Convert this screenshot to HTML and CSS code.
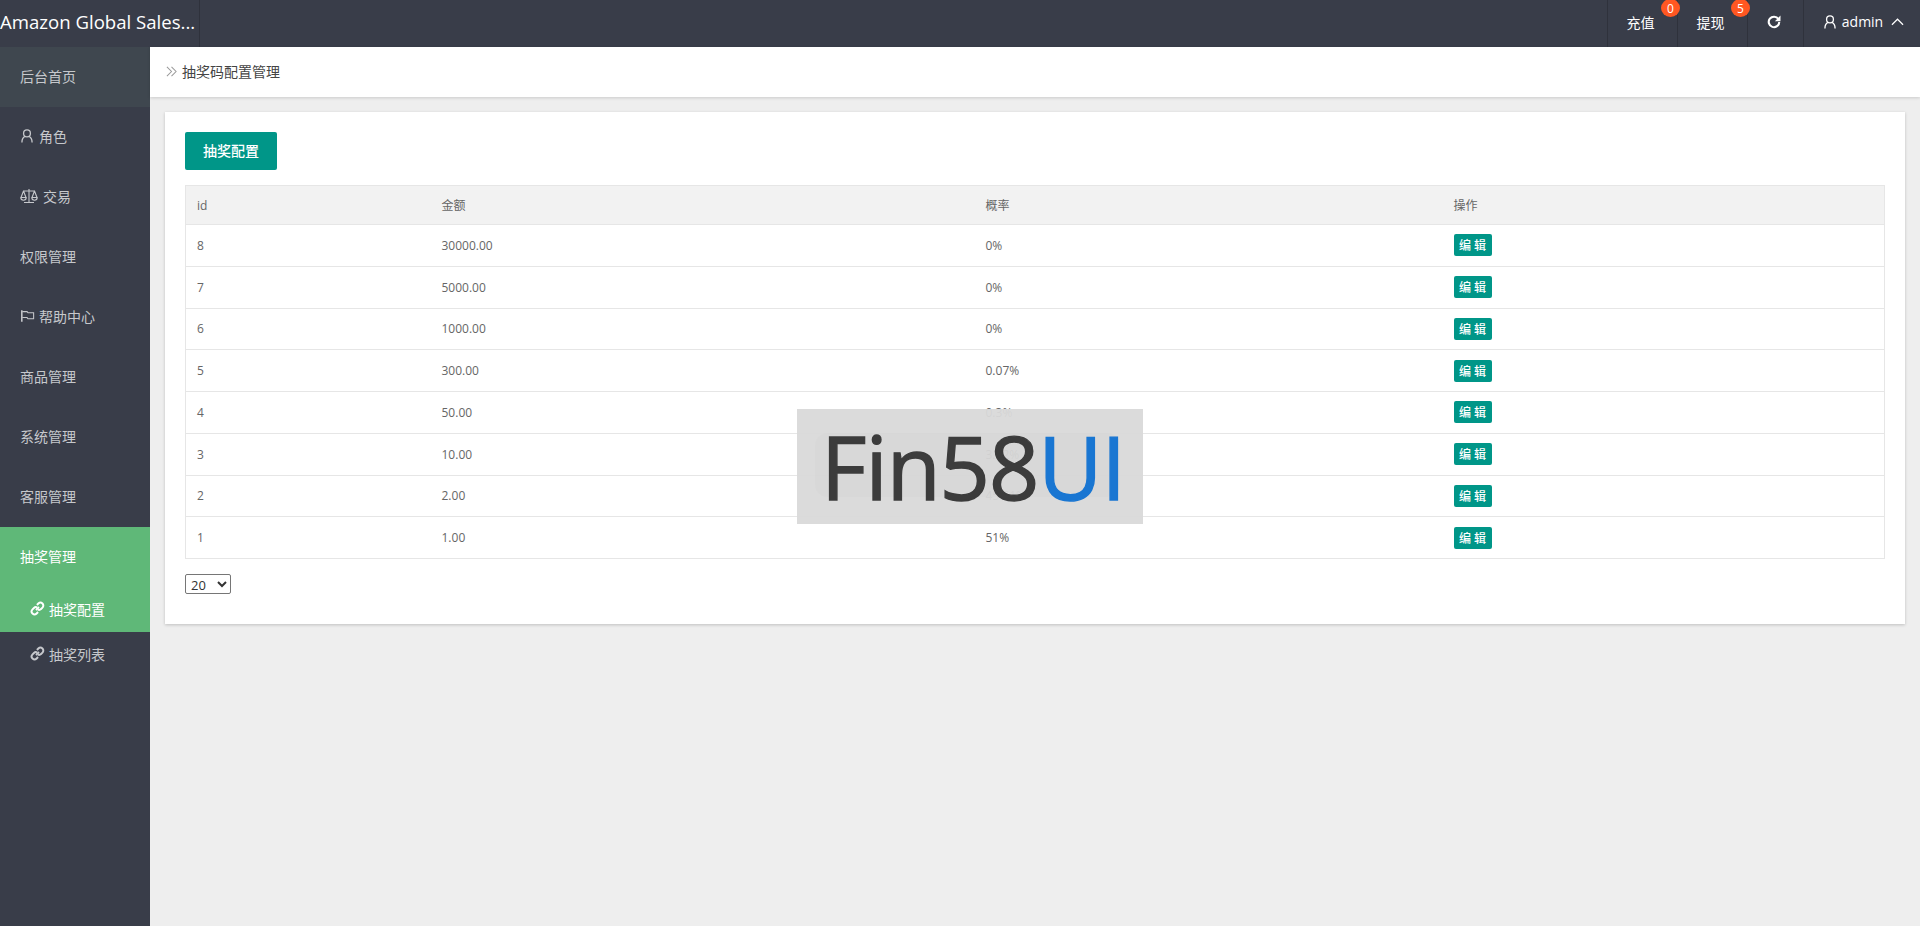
FILE: index.html
```html
<!DOCTYPE html>
<html lang="zh-CN">
<head>
    <meta charset="UTF-8">
    <title>抽奖码配置管理</title>
    <link rel="stylesheet" href="styles.css">
</head>
<body>
    <header class="topbar">
        <div class="logo">Amazon Global Sales...</div>
        <ul class="top-nav">
            <li class="top-item top-recharge">充值<span class="badge">0</span></li>
            <li class="top-item top-withdraw">提现<span class="badge">5</span></li>
            <li class="top-item top-refresh">
                <svg class="icon-refresh" viewBox="0 0 16 16"><path d="M13 4.6A6 6 0 1 0 14 8" fill="none" stroke="currentColor" stroke-width="2.4"/><path d="M9 7h6.4V.6z" fill="currentColor"/></svg>
            </li>
            <li class="top-item top-user">
                <svg class="icon-16" viewBox="0 0 16 16"><use href="#i-user"/></svg>
                admin
                <svg class="icon-caret" viewBox="0 0 14 8"><path d="M1 7l6-6 6 6" fill="none" stroke="currentColor" stroke-width="1.3"/></svg>
            </li>
        </ul>
    </header>

    <svg class="defs">
        <symbol id="i-user" viewBox="0 0 16 16"><circle cx="8" cy="5" r="3.9" fill="none" stroke="currentColor" stroke-width="1.5"/><path d="M2.2 15.5c0-3.6 1.6-6.2 3.6-7M13.8 15.5c0-3.6-1.6-6.2-3.6-7" fill="none" stroke="currentColor" stroke-width="1.5"/></symbol>
        <symbol id="i-link" viewBox="0 0 16 16"><path d="M6.4 9.6l3.2-3.2" stroke="currentColor" stroke-width="2" fill="none"/><path d="M7.4 4.2l1.5-1.5a3.1 3.1 0 0 1 4.4 4.4l-1.5 1.5a3.1 3.1 0 0 1-3.4.6M8.6 11.8l-1.5 1.5a3.1 3.1 0 0 1-4.4-4.4l1.5-1.5a3.1 3.1 0 0 1 3.4-.6" stroke="currentColor" stroke-width="2.1" fill="none"/></symbol>
    </svg>

    <div class="layout">
        <aside class="sidebar">
            <a class="menu-item menu-home">后台首页</a>
            <a class="menu-item"><svg class="icon-16" viewBox="0 0 16 16"><use href="#i-user"/></svg>角色</a>
            <a class="menu-item"><svg class="icon-scale" viewBox="0 0 18 16"><path d="M9 1v13M4 14.5h10M3 3h12M3.5 3L1 9.5M3.5 3L6 9.5M14.5 3L12 9.5M14.5 3L17 9.5M.8 9.5h5.4a2.7 2.7 0 0 1-5.4 0zM11.8 9.5h5.4a2.7 2.7 0 0 1-5.4 0z" fill="none" stroke="currentColor" stroke-width="1.1"/></svg>交易</a>
            <a class="menu-item">权限管理</a>
            <a class="menu-item"><svg class="icon-flag" viewBox="0 0 16 16"><path d="M1.5 1.5v13" stroke="currentColor" stroke-width="1.8"/><path d="M2 3h5.5l1 1.2h6.5v7H8.5l-1-1.4H2" fill="none" stroke="currentColor" stroke-width="1.2"/></svg>帮助中心</a>
            <a class="menu-item">商品管理</a>
            <a class="menu-item">系统管理</a>
            <a class="menu-item">客服管理</a>
            <div class="menu-group">
                <a class="menu-item menu-open">抽奖管理</a>
                <a class="sub-item"><svg class="icon-link" viewBox="0 0 16 16"><use href="#i-link"/></svg>抽奖配置</a>
            </div>
            <a class="sub-item"><svg class="icon-link" viewBox="0 0 16 16"><use href="#i-link"/></svg>抽奖列表</a>
        </aside>

        <main class="main">
            <div class="crumb">
                <svg class="icon-crumb" viewBox="0 0 12 12"><path d="M1 1l5 5-5 5M6 1l5 5-5 5" fill="none" stroke="currentColor" stroke-width="1.1"/></svg>
                抽奖码配置管理
            </div>
            <section class="card">
                <button class="btn">抽奖配置</button>
                <table class="data-table">
                    <colgroup>
                        <col class="col-id"><col class="col-amount"><col class="col-rate"><col>
                    </colgroup>
                    <thead>
                        <tr><th>id</th><th>金额</th><th>概率</th><th>操作</th></tr>
                    </thead>
                    <tbody>
                        <tr><td>8</td><td>30000.00</td><td>0%</td><td><button class="btn-xs">编 辑</button></td></tr>
                        <tr><td>7</td><td>5000.00</td><td>0%</td><td><button class="btn-xs">编 辑</button></td></tr>
                        <tr><td>6</td><td>1000.00</td><td>0%</td><td><button class="btn-xs">编 辑</button></td></tr>
                        <tr><td>5</td><td>300.00</td><td>0.07%</td><td><button class="btn-xs">编 辑</button></td></tr>
                        <tr><td>4</td><td>50.00</td><td>0.3%</td><td><button class="btn-xs">编 辑</button></td></tr>
                        <tr><td>3</td><td>10.00</td><td>3.02%</td><td><button class="btn-xs">编 辑</button></td></tr>
                        <tr><td>2</td><td>2.00</td><td>45.61%</td><td><button class="btn-xs">编 辑</button></td></tr>
                        <tr><td>1</td><td>1.00</td><td>51%</td><td><button class="btn-xs">编 辑</button></td></tr>
                    </tbody>
                </table>
                <select class="page-size">
                    <option>20</option>
                </select>
            </section>
        </main>
    </div>

    <!-- watermark image on top of the table -->
    <div class="watermark">
        <div class="watermark-ghost"></div>
        <span class="wm-dark">Fin58</span><span class="wm-blue">UI</span>
    </div>
</body>
</html>
```

FILE: styles.css
```css
* { box-sizing: border-box; }
html, body { height: 100%; }
body {
    margin: 0;
    height: 926px;
    overflow: hidden;
    background: #eee;
    color: #666;
    font-family: "Open Sans", "Noto Sans CJK SC", sans-serif;
    font-size: 14px;
}
.defs { display: none; }

/* top bar */
.topbar {
    height: 47px;
    background: #393d49;
    display: flex;
    justify-content: space-between;
    color: #fff;
}
.logo {
    width: 200px;
    height: 47px;
    line-height: 44px;
    font-size: 18.6px;
    white-space: nowrap;
    border-right: 1px solid #2f323c;
}
.top-nav {
    list-style: none;
    margin: 0;
    padding: 0;
    display: flex;
}
.top-item {
    position: relative;
    height: 47px;
    display: flex;
    align-items: center;
    justify-content: center;
    padding-bottom: 4px;
    font-size: 14px;
    border-left: 1px solid #2f323c;
}
.top-recharge, .top-withdraw { width: 70px; padding-right: 4px; }
.top-refresh { width: 56px; padding-right: 4px; }
.top-user { width: 117px; padding-left: 3px; }
.badge {
    position: absolute;
    z-index: 1;
    top: -1px;
    left: 53px;
    width: 19px;
    height: 18px;
    border-radius: 50%;
    background: #ff5722;
    font-size: 12px;
    line-height: 19px;
    text-align: center;
}
.icon-refresh { width: 14px; height: 14px; }
.icon-16 { width: 14px; height: 14px; margin-right: 5px; }
.icon-caret { width: 13px; height: 8px; margin-left: 8px; }

/* side menu */
.layout { display: flex; height: 879px; }
.sidebar {
    width: 150px;
    flex-shrink: 0;
    background: #393d49;
    color: #c6c8cc;
}
.menu-item {
    display: flex;
    align-items: center;
    height: 60px;
    padding-left: 20px;
    padding-bottom: 3px;
}
.menu-home { background: #3f474f; }
.menu-group { background: #5fb878; color: #fff; }
.sub-item {
    display: flex;
    align-items: center;
    height: 45px;
    padding-left: 30px;
    padding-bottom: 2px;
}
.icon-scale { width: 18px; height: 16px; margin-right: 5px; }
.icon-flag { width: 15px; height: 14px; margin-right: 4px; }
.icon-link { width: 15px; height: 15px; margin-right: 4px; }

/* content */
.main { flex: 1; min-width: 0; }
.crumb {
    height: 50px;
    background: #fff;
    display: flex;
    align-items: center;
    padding-left: 16px;
    padding-bottom: 2px;
    color: #444;
    box-shadow: 0 1px 3px rgba(0,0,0,.15);
}
.icon-crumb { width: 11px; height: 11px; margin-right: 5px; color: #999; }
.card {
    margin: 15px 15px 0;
    height: 512px;
    padding: 20px;
    background: #fff;
    box-shadow: 0 1px 3px rgba(0,0,0,.2);
}
.btn {
    display: block;
    width: 92px;
    height: 38px;
    padding: 0 0 2px;
    border: 0;
    border-radius: 2px;
    background: #009688;
    color: #fff;
    font: inherit;
    font-weight: 500;
}
.data-table {
    width: 100%;
    margin-top: 15px;
    border-collapse: collapse;
    table-layout: fixed;
    font-size: 12px;
    border-left: 1px solid #e6e6e6;
    border-right: 1px solid #e6e6e6;
}
.col-id { width: 245px; }
.col-amount { width: 544px; }
.col-rate { width: 468px; }
.data-table th, .data-table td {
    border-top: 1px solid #e6e6e6;
    border-bottom: 1px solid #e6e6e6;
    padding: 0 11px;
    font-weight: 400;
    text-align: left;
    height: 41.75px;
}
.data-table th { height: 39px; background: #f2f2f2; }
.btn-xs {
    display: block;
    width: 38px;
    height: 22px;
    padding: 0;
    border: 0;
    border-radius: 2px;
    background: #009688;
    color: #fff;
    font: inherit;
    font-size: 12px;
    font-weight: 500;
}
.page-size {
    display: block;
    margin-top: 15px;
    width: 46px;
    height: 20px;
    padding: 0 0 0 1px;
    background: #fff;
    border: 1px solid #767676;
    border-radius: 2px;
    color: #333;
    font: inherit;
    font-size: 13px;
}

/* watermark */
.watermark {
    position: absolute;
    left: 797px;
    top: 409px;
    width: 346px;
    height: 115px;
    padding-left: 24px;
    background: rgba(217,217,217,.95);
    font-size: 88px;
    line-height: 115px;
    letter-spacing: -1px;
    white-space: nowrap;
    overflow: hidden;
    -webkit-text-stroke: 1.4px;
}
.watermark-ghost {
    position: absolute;
    left: 18px;
    top: 24px;
    width: 305px;
    height: 64px;
    border-radius: 12px;
    background: rgba(0,0,0,.012);
}
.wm-dark, .wm-blue { position: relative; }
.wm-dark { color: #3c3c3c; }
.wm-blue { color: #1976d2; }
```
